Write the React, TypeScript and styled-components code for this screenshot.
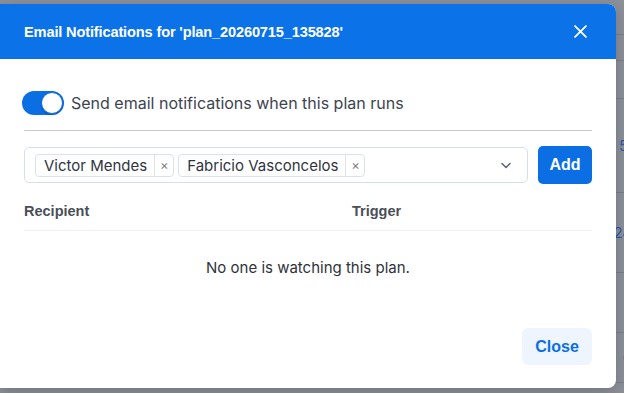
import React from "react";
import styled, { createGlobalStyle } from "styled-components";

const GlobalStyle = createGlobalStyle`
  html, body { margin: 0; padding: 0; }
  body {
    width: 624px;
    height: 393px;
    overflow: hidden;
    background: #8c9099;
    font-family: Inter, "Noto Sans", sans-serif;
  }
  * { box-sizing: border-box; }
`;

const Page = styled.div`
  position: relative;
  width: 624px;
  height: 393px;
  overflow: hidden;
  background: #8c9099;
`;

const BgTable = styled.div`
  display: flex;
  flex-direction: column;
`;

const BgRow = styled.div<{ $h: number }>`
  height: ${(p) => p.$h}px;
  border-bottom: 1px solid #7b8089;
  display: flex;
  align-items: center;
  justify-content: flex-end;
  font-size: 15px;
  color: #2f5aa8;
  white-space: nowrap;
`;

const BgCell = styled.span`
  margin-right: -8px;
`;

const Dialog = styled.div`
  position: absolute;
  left: 0;
  top: 4px;
  width: 616px;
  height: 384px;
  background: #ffffff;
  border-radius: 0 8px 8px 0;
  overflow: hidden;
  display: flex;
  flex-direction: column;
  box-shadow: 0 4px 16px rgba(0, 0, 0, 0.2);
`;

const Header = styled.div`
  height: 55px;
  flex: none;
  background: #0b72e7;
  display: flex;
  align-items: center;
  justify-content: space-between;
  padding: 0 29px 0 24px;
`;

const Title = styled.h2`
  margin: 0;
  font-family: "Liberation Sans", Arial, sans-serif;
  font-weight: 700;
  font-size: 14.6px;
  color: #ffffff;
  letter-spacing: -0.15px;
`;

const IconButton = styled.button`
  border: none;
  background: transparent;
  padding: 0;
  width: 14px;
  height: 14px;
  display: flex;
  align-items: center;
  justify-content: center;
  color: #ffffff;
`;

const Body = styled.div`
  flex: 1;
  display: flex;
  flex-direction: column;
  padding: 32px 24px 0 24px;
`;

const ToggleRow = styled.label`
  display: flex;
  align-items: center;
  gap: 7px;
  margin-left: -2px;
  height: 24px;
  font-size: 16px;
  color: #3d4451;
`;

const Switch = styled.span<{ $on: boolean }>`
  position: relative;
  width: 42px;
  height: 24px;
  border-radius: 12px;
  background: ${(p) => (p.$on ? "#0b6fe3" : "#c8ccd3")};
  flex: none;
`;

const Knob = styled.span<{ $on: boolean }>`
  position: absolute;
  top: 1px;
  left: ${(p) => (p.$on ? "19px" : "1px")};
  width: 22px;
  height: 22px;
  border-radius: 50%;
  background: #ffffff;
  border: 1px solid #0b6fe3;
  box-shadow: 0 1px 2px rgba(0, 0, 0, 0.25);
`;

const Divider = styled.hr`
  margin: 15px 0 15px 0;
  border: none;
  border-top: 1px solid #c3c6cb;
  height: 0;
`;

const PickerRow = styled.div`
  display: flex;
  align-items: center;
  gap: 10px;
`;

const Select = styled.div`
  flex: 1;
  height: 36px;
  border: 1px solid #d6deeb;
  border-radius: 5px;
  display: flex;
  align-items: center;
  padding: 0 10px 0 10px;
  gap: 4px;
`;

const Tag = styled.span`
  display: inline-flex;
  align-items: stretch;
  height: 23px;
  border: 1px solid #dbe2ed;
  border-radius: 4px;
  font-size: 15px;
  color: #2f3542;
`;

const TagLabel = styled.span`
  display: flex;
  align-items: center;
  padding: 0 7px 0 8px;
`;

const TagRemove = styled.span`
  display: flex;
  align-items: center;
  justify-content: center;
  width: 19px;
  border-left: 1px solid #dbe2ed;
  color: #7b818c;
  font-size: 13px;
`;

const Spacer = styled.span`
  flex: 1;
`;

const Chevron = styled.span`
  display: flex;
  align-items: center;
  color: #5b6270;
  margin-right: 4px;
`;

const PrimaryButton = styled.button`
  height: 38px;
  width: 54px;
  border: none;
  border-radius: 5px;
  background: #0b6fe3;
  color: #ffffff;
  font-family: "Liberation Sans", Arial, sans-serif;
  font-weight: 700;
  font-size: 16px;
  padding: 0;
`;

const TableHead = styled.div`
  display: grid;
  grid-template-columns: 328px 1fr;
  margin-top: 18px;
  line-height: 18px;
  padding-bottom: 10px;
  border-bottom: 1px solid #eef0f3;
  font-family: "Liberation Sans", Arial, sans-serif;
  font-weight: 700;
  font-size: 14.5px;
  color: #4a4f58;
`;

const Empty = styled.div`
  text-align: center;
  font-size: 15px;
  line-height: 18px;
  color: #2f333a;
  padding-top: 28px;
`;

const Footer = styled.div`
  margin-top: auto;
  display: flex;
  justify-content: flex-end;
  padding: 0 24px 23px 24px;
`;

const SoftButton = styled.button`
  height: 37px;
  width: 70px;
  border: none;
  border-radius: 6px;
  background: #eef5fe;
  color: #0b6fe3;
  font-family: "Liberation Sans", Arial, sans-serif;
  font-weight: 700;
  font-size: 16px;
  padding: 0;
`;

const X = ({ size, stroke }: { size: number; stroke: number }) => (
  <svg width={size} height={size} viewBox="0 0 12 12" fill="none">
    <path d="M1 1L11 11M11 1L1 11" stroke="currentColor" strokeWidth={stroke} strokeLinecap="round" />
  </svg>
);

const recipients = ["Victor Mendes", "Fabricio Vasconcelos"];

const bgRows: { h: number; t: string }[] = [
  { h: 35, t: "" },
  { h: 26, t: "" },
  { h: 38, t: "" },
  { h: 94, t: "5," },
  { h: 80, t: "24" },
  { h: 60, t: "" },
  { h: 50, t: "6" },
];

export default function App() {
  return (
    <>
      <GlobalStyle />
      <Page>
        <BgTable>
          {bgRows.map((r, i) => (
            <BgRow key={i} $h={r.h}>
              <BgCell>{r.t}</BgCell>
            </BgRow>
          ))}
        </BgTable>
        <Dialog role="dialog">
          <Header>
            <Title>Email Notifications for 'plan_20260715_135828'</Title>
            <IconButton aria-label="Close">
              <X size={13} stroke={1.7} />
            </IconButton>
          </Header>
          <Body>
            <ToggleRow>
              <Switch $on>
                <Knob $on />
              </Switch>
              Send email notifications when this plan runs
            </ToggleRow>
            <Divider />
            <PickerRow>
              <Select>
                {recipients.map((r) => (
                  <Tag key={r}>
                    <TagLabel>{r}</TagLabel>
                    <TagRemove>×</TagRemove>
                  </Tag>
                ))}
                <Spacer />
                <Chevron>
                  <svg width="14" height="14" viewBox="0 0 14 14" fill="none">
                    <path d="M3 5.5L7 9.5L11 5.5" stroke="currentColor" strokeWidth="1.5" strokeLinecap="round" strokeLinejoin="round" />
                  </svg>
                </Chevron>
              </Select>
              <PrimaryButton>Add</PrimaryButton>
            </PickerRow>
            <TableHead>
              <span>Recipient</span>
              <span>Trigger</span>
            </TableHead>
            <Empty>No one is watching this plan.</Empty>
          </Body>
          <Footer>
            <SoftButton>Close</SoftButton>
          </Footer>
        </Dialog>
      </Page>
    </>
  );
}
